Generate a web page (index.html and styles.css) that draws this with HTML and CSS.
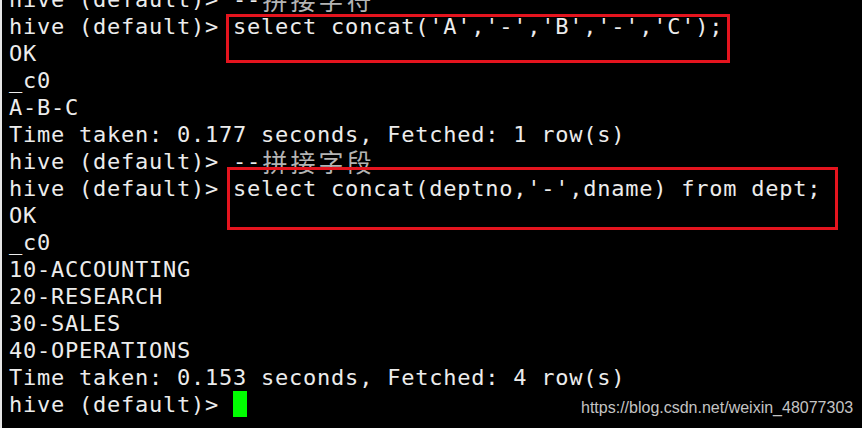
FILE: index.html
```html
<!DOCTYPE html>
<html lang="zh">
<head>
<meta charset="utf-8">
<title>hive concat</title>
<link rel="stylesheet" href="styles.css">
</head>
<body>
<div class="term">
<pre class="screen">hive (default)&gt; --<span class="cj">拼</span><span class="cj">接</span><span class="cj">字</span><span class="cj">符</span>
hive (default)&gt; select concat('A','-','B','-','C');
OK
_c0
A-B-C
Time taken: 0.177 seconds, Fetched: 1 row(s)
hive (default)&gt; --<span class="cj">拼</span><span class="cj">接</span><span class="cj">字</span><span class="cj">段</span>
hive (default)&gt; select concat(deptno,'-',dname) from dept;
OK
_c0
10-ACCOUNTING
20-RESEARCH
30-SALES
40-OPERATIONS
Time taken: 0.153 seconds, Fetched: 4 row(s)
hive (default)&gt; <span class="cursor"> </span></pre>
<div class="mark mark-one"></div>
<div class="mark mark-two"></div>
<div class="watermark">https://blog.csdn.net/weixin_48077303</div>
</div>
</body>
</html>
```

FILE: styles.css
```css
html, body {
  margin: 0;
  padding: 0;
  background: #000;
}

body {
  width: 862px;
  height: 428px;
  overflow: hidden;
}

.term {
  position: relative;
  width: 860px;
  height: 428px;
  border-left: 2px solid #e6e6e6;
  background: #000;
  overflow: hidden;
}

.screen {
  margin: -14px 0 0 0;
  padding-left: 7px;
  font-family: "DejaVu Sans Mono", monospace;
  font-size: 22px;
  letter-spacing: 0.76px;
  line-height: 27px;
  color: #ececec;
  white-space: pre;
}

.cj {
  display: inline-block;
  width: 28px;
  letter-spacing: 0;
  text-align: center;
  font-family: "Noto Sans CJK SC", sans-serif;
  font-size: 25px;
  font-weight: 400;
  color: #b4b4b4;
  vertical-align: top;
  line-height: 27px;
}

.cursor {
  display: inline-block;
  width: 14px;
  height: 26px;
  background: #00ff00;
  vertical-align: top;
  letter-spacing: 0;
}

.mark {
  position: absolute;
  border: 3px solid #e5141e;
  box-sizing: border-box;
}

.mark-one {
  left: 224px;
  top: 14px;
  width: 504px;
  height: 49px;
}

.mark-two {
  left: 225px;
  top: 167px;
  width: 611px;
  height: 63px;
}

.watermark {
  position: absolute;
  left: 579px;
  top: 399px;
  font-family: "Liberation Sans", Arial, sans-serif;
  font-size: 16px;
  line-height: 18px;
  color: #c4c4c4;
}
```
